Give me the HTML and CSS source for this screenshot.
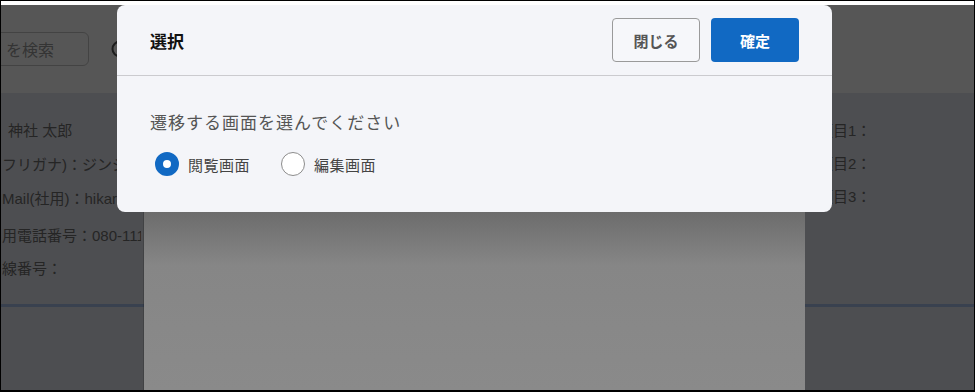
FILE: index.html
```html
<!DOCTYPE html>
<html lang="ja">
<head>
    <meta charset="UTF-8">
    <meta name="viewport" content="width=device-width, initial-scale=1.0">
    <title>画面選択</title>
    <link rel="stylesheet" href="styles.css">
</head>
<body>

<div class="screen">
    <div class="page">
        <header class="topbar">
            <div class="search">を検索</div>
            <svg class="topbar-icon" width="18" height="18" viewBox="0 0 18 18">
                <circle cx="9" cy="9" r="7.5" fill="none" stroke="#555" stroke-width="2"/>
            </svg>
        </header>

        <main class="content">
            <div class="info-row">
                <ul class="info-list left">
                    <li class="first">神社 太郎</li>
                    <li>フリガナ)：ジンジャ タロウ</li>
                    <li>Mail(社用)：hikaru.jinja@example.jp</li>
                    <li>用電話番号：080-1111-2222</li>
                    <li>線番号：</li>
                </ul>
                <ul class="info-list right">
                    <li>項目1：</li>
                    <li>項目2：</li>
                    <li>項目3：</li>
                </ul>
            </div>
            <div class="divider"></div>
        </main>

        <div class="backdrop"></div>
        <div class="sheet"></div>

        <div class="dialog">
            <div class="dialog-header">
                <h2>選択</h2>
                <div class="dialog-actions">
                    <button class="close-btn">閉じる</button>
                    <button class="ok-btn">確定</button>
                </div>
            </div>
            <div class="dialog-body">
                <p>遷移する画面を選んでください</p>
                <div class="radio-group">
                    <label class="radio">
                        <input type="radio" name="target" checked>
                        <span class="mark"></span>
                        閲覧画面
                    </label>
                    <label class="radio">
                        <input type="radio" name="target">
                        <span class="mark"></span>
                        編集画面
                    </label>
                </div>
            </div>
        </div>
    </div>
</div>

</body>
</html>
```

FILE: styles.css
```css
body {
    margin: 0;
    font-family: "Noto Sans CJK JP", "Noto Sans", sans-serif;
    background-color: #000;
}
.screen {
    width: 973px;
    height: 385px;
    border-top: 1px solid #000;
    border-left: 1px solid #000;
    border-right: 1px solid #000;
    border-bottom: 2px solid #000;
    padding-top: 4px;
    background-color: #fff;
}
.page {
    position: relative;
    height: 385px;
    overflow: hidden;
    background-color: #e2e4ec;
}
.topbar {
    height: 88px;
    display: flex;
    align-items: center;
    background-color: #fcfcfc;
}
.search {
    margin-left: -80px;
    width: 168px;
    height: 34px;
    box-sizing: border-box;
    padding-left: 84px;
    border: 1px solid #c4c4c4;
    border-radius: 6px;
    font-size: 16px;
    line-height: 32px;
    color: #999;
    white-space: nowrap;
}
.topbar-icon {
    margin-left: 22px;
}
.content {
    padding-top: 26px;
}
.info-row {
    display: flex;
    justify-content: space-between;
}
.info-list {
    list-style: none;
    margin: 0;
    padding: 0;
    font-family: "Liberation Sans", "Noto Sans CJK JP", sans-serif;
    font-size: 15px;
    color: #6e6e6e;
}
.info-list li {
    height: 34px;
    line-height: 24px;
    white-space: nowrap;
}
.info-list.left {
    width: 140px;
    overflow: hidden;
}
.info-list.left li {
    margin-left: 1px;
}
.info-list.left li.first {
    margin-left: 7px;
}
.info-list.left li:nth-child(3) {
    height: 37px;
}
.info-list.left li:nth-child(4) {
    height: 33px;
}
.info-list.right {
    width: 156px;
}
.info-list.right li {
    height: 33px;
}
.divider {
    margin-top: 13px;
    height: 3px;
    background-color: #a8bfe6;
}
.backdrop {
    position: absolute;
    inset: 0;
    background-color: rgba(0, 0, 0, 0.66);
}
.sheet {
    position: absolute;
    left: 143px;
    top: 0;
    bottom: 0;
    width: 661px;
    background: linear-gradient(#5d5d5d 0, #6c6c6c 207px, #868686 260px, #8a8a8a 100%);
    box-shadow: -1px 0 0 rgba(0, 0, 0, 0.15);
}
.dialog {
    position: absolute;
    left: 116px;
    top: 0;
    width: 715px;
    height: 207px;
    background-color: #f4f5f9;
    border-radius: 8px;
}
.dialog-header {
    height: 70px;
    display: flex;
    align-items: center;
    justify-content: space-between;
    padding: 0 33px;
    border-bottom: 1px solid #cbcbcf;
}
.dialog-header h2 {
    margin: 0;
    font-size: 17px;
    font-weight: bold;
    color: #111;
}
.dialog-actions {
    display: flex;
    gap: 11px;
}
button {
    width: 88px;
    height: 44px;
    font-family: inherit;
    font-size: 15px;
    font-weight: bold;
    border-radius: 4px;
    cursor: pointer;
}
.close-btn {
    background-color: #f6f7fa;
    border: 1px solid #9a9a9a;
    color: #555;
}
.ok-btn {
    background-color: #1169c3;
    border: none;
    color: #fff;
}
.dialog-body {
    padding: 33px 33px 0;
}
.dialog-body p {
    margin: 0;
    font-size: 17px;
    letter-spacing: 1px;
    line-height: 26px;
    color: #555;
}
.radio-group {
    display: flex;
    gap: 31px;
    margin-top: 17px;
    margin-left: 5px;
}
.radio {
    display: flex;
    align-items: center;
    gap: 9px;
    font-size: 15px;
    letter-spacing: 0.5px;
    color: #444;
    cursor: pointer;
}
.radio input {
    display: none;
}
.radio .mark {
    width: 24px;
    height: 24px;
    box-sizing: border-box;
    border-radius: 50%;
    border: 1.5px solid #8c8c8c;
    background-color: #fff;
}
.radio input:checked + .mark {
    border: 8px solid #1169c3;
}
```
